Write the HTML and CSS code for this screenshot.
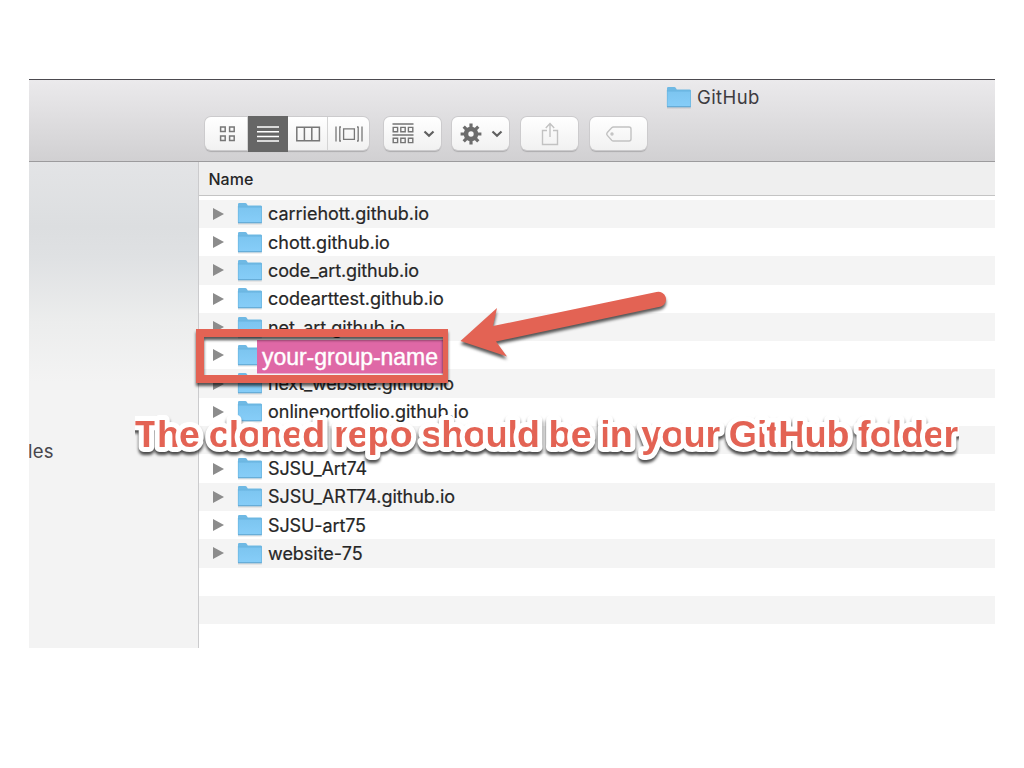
FILE: index.html
```html
<!DOCTYPE html>
<html lang="en">
<head>
<meta charset="utf-8">
<title>GitHub</title>
<link rel="stylesheet" href="styles.css">
</head>
<body>
<svg class="defs" width="0" height="0" aria-hidden="true">
  <defs>
    <linearGradient id="folderFill" x1="0" y1="0" x2="0" y2="1">
      <stop offset="0" stop-color="#7cc5f0"/><stop offset="1" stop-color="#86cdf8"/>
    </linearGradient>
    <symbol id="folder" viewBox="0 0 26 23">
      <path d="M1 20.8V2.2Q1 1 2.2 1H8.2Q9.4 1 10 2.2L10.8 3.6H23.6Q24.8 3.6 24.8 4.8V20.8Z" fill="#6fb9e4"/>
      <path d="M1 5.2H24.8V20.4H1Z" fill="url(#folderFill)"/>
      <path d="M1 5H24.8" stroke="#68b3de" stroke-width=".8"/>
      <path d="M1.300 4V20.500M24.500 4V20.500" stroke="#68b3de" stroke-width=".6"/>
      <path d="M1 20.8H24.8" stroke="#58a2cf" stroke-width="1"/>
      <path d="M1 22H24.8" stroke="#000" stroke-opacity=".12" stroke-width="1"/>
    </symbol>
  </defs>
</svg>
<main class="window">
  <header class="toolbar">
    <h1 class="title"><svg class="folder"><use href="#folder"/></svg><span>GitHub</span></h1>
    <div class="tools">
      <div class="segmented">
        <span class="seg first"><svg width="18" height="18" viewBox="0 0 18 18" fill="none" stroke="#777" stroke-width="1.5"><path d="M1.6 2h4.6v4.6H1.6zM10.6 2h4.6v4.6h-4.6zM1.6 11h4.6v4.6H1.6zM10.6 11h4.6v4.6h-4.6z"/></svg></span>
        <span class="seg active"><svg width="22" height="18" viewBox="0 0 22 18" stroke="#fff" stroke-width="1.5"><path d="M0 2h22M0 6.7h22M0 11.4h22M0 16.1h22"/></svg></span>
        <span class="seg"><svg width="26" height="18" viewBox="0 0 26 18" fill="none" stroke="#777" stroke-width="1.5"><path d="M1.8 2.2h22.6v13.6H1.8zM9.4 2v14M16.8 2v14"/></svg></span>
        <span class="seg last"><svg width="28" height="18" viewBox="0 0 28 18" fill="none" stroke="#777" stroke-width="1.3"><path d="M1 1.5v15M4.2 2H6M4.8 2v14M4.2 16H6M8.6 3.8h10.8v10.6H8.6zM22 2h1.6M23.2 2v14M22 16h1.6M27 1.5v15"/></svg></span>
      </div>
      <span class="button arrange">
        <svg width="22" height="21" viewBox="0 0 22 21" fill="none" stroke="#747474" stroke-width="1.4"><path d="M.5 1h21M.5 12h21M1.2 4.4h4.4v4.4H1.2zM8.8 4.4h4.4v4.4H8.8zM16.4 4.4h4.4v4.4h-4.4zM1.2 15.2h4.4v4.4H1.2zM8.8 15.2h4.4v4.4H8.8zM16.4 15.2h4.4v4.4h-4.4z"/></svg>
        <svg class="chevron" width="12" height="8" viewBox="0 0 12 8"><path d="M1.5 1.5L6 5.8L10.500 1.500"/></svg>
      </span>
      <span class="button action">
        <svg width="22" height="22" viewBox="-11 -11 22 22" fill="none" stroke="#6c6c6c"><circle r="5" stroke-width="4.6"/><path stroke-width="3.2" d="M0-6V-10.400M0 6V10.400M-6 0H-10.400M6 0H10.400M4.300-4.300L7.300-7.300M-4.300-4.300L-7.300-7.300M4.300 4.300L7.300 7.300M-4.300 4.300L-7.300 7.300"/></svg>
        <svg class="chevron" width="12" height="8" viewBox="0 0 12 8"><path d="M1.500 1.500L6 5.800L10.500 1.500"/></svg>
      </span>
      <span class="button"><svg width="18" height="24" viewBox="0 0 18 24" fill="none" stroke="#c2c2c2" stroke-width="1.400"><path d="M6 8.500H1.500V22.500H16.500V8.500H12M9 15V1.500M4.800 6L9 1.500L13.200 6"/></svg></span>
      <span class="button"><svg width="28" height="18" viewBox="0 0 28 18" fill="none" stroke="#c2c2c2" stroke-width="1.400"><path d="M8.500 2H24Q26 2 26 4V14Q26 16 24 16H8.500Q7.500 16 6.700 15.200L2.300 10.400Q1 9 2.300 7.600L6.700 2.800Q7.500 2 8.500 2Z"/><circle cx="7" cy="9" r="1"/></svg></span>
    </div>
  </header>
  <div class="body">
    <aside class="sidebar"><span>les</span></aside>
    <section class="files">
      <div class="column-head">Name</div>
      <ul class="list">
        <li class="row"><i class="tri"></i><svg class="folder"><use href="#folder"/></svg><span>carriehott.github.io</span></li>
        <li class="row"><i class="tri"></i><svg class="folder"><use href="#folder"/></svg><span>chott.github.io</span></li>
        <li class="row"><i class="tri"></i><svg class="folder"><use href="#folder"/></svg><span class="snug">code_art.github.io</span></li>
        <li class="row"><i class="tri"></i><svg class="folder"><use href="#folder"/></svg><span>codearttest.github.io</span></li>
        <li class="row"><i class="tri"></i><svg class="folder"><use href="#folder"/></svg><span>net_art.github.io</span></li>
        <li class="row"><i class="tri"></i><svg class="folder"><use href="#folder"/></svg></li>
        <li class="row"><i class="tri"></i><svg class="folder"><use href="#folder"/></svg><span class="tight">next_website.github.io</span></li>
        <li class="row"><i class="tri"></i><svg class="folder"><use href="#folder"/></svg><span>onlineportfolio.github.io</span></li>
        <li class="row"></li>
        <li class="row"><i class="tri"></i><svg class="folder"><use href="#folder"/></svg><span class="snug">SJSU_Art74</span></li>
        <li class="row"><i class="tri"></i><svg class="folder"><use href="#folder"/></svg><span>SJSU_ART74.github.io</span></li>
        <li class="row"><i class="tri"></i><svg class="folder"><use href="#folder"/></svg><span class="snug">SJSU-art75</span></li>
        <li class="row"><i class="tri"></i><svg class="folder"><use href="#folder"/></svg><span>website-75</span></li>
        <li class="row"></li>
        <li class="row"></li>
      </ul>
    </section>
  </div>
</main>
<svg class="annotations" width="1024" height="768" viewBox="0 0 1024 768">
  <defs>
    <clipPath id="captionArea"><rect x="135" y="405" width="824" height="70"/></clipPath>
  </defs>
  <rect x="257" y="340" width="187" height="33.500" fill="#df68a6"/>
  <text class="group-name" x="262" y="365" textLength="176">your-group-name</text>
  <g class="shadow" fill="#e36354">
    <path fill-rule="evenodd" d="M196 329H448V383H196ZM204 337V375H443V337Z"/>
  </g>
  <g class="shadow" fill="#e36354">
    <path d="M460.500 341L497 308L493 326L656.500 292A7.600 7.600 0 0 1 661 306.500L496 341.500L507 356.500Z"/>
  </g>
  <g clip-path="url(#captionArea)">
    <text class="caption" x="135" y="447" textLength="823">The cloned repo should be in your GitHub folder</text>
  </g>
</svg>
</body>
</html>
```

FILE: styles.css
```css
* { box-sizing: border-box; }
body {
  margin: 0;
  width: 1024px;
  height: 768px;
  overflow: hidden;
  background: #fff;
  font-family: Inter, "Liberation Sans", sans-serif;
  color: #262626;
}
.defs { display: block; }
.window {
  width: 966px;
  height: 569px;
  margin: 79px 0 0 29px;
  overflow: hidden;
}
.toolbar {
  height: 83px;
  border-top: 1.5px solid #4c4a4f;
  border-bottom: 1.5px solid #9c9b9d;
  background: linear-gradient(#ebeaec, #d1d0d2);
}
.title {
  display: flex;
  align-items: center;
  gap: 5px;
  height: 34px;
  margin: 0;
  padding: 0 0 0 637px;
  font-size: 18.500px;
  font-weight: 400;
  letter-spacing: .4px;
  color: #3d3b3f;
}
.folder { flex: none; width: 26px; height: 23px; }
.tools {
  display: flex;
  gap: 12px;
  padding: 3px 0 0 176px;
}
.segmented, .button {
  display: flex;
  height: 33px;
  border-radius: 6px;
  background: linear-gradient(#fff, #f1f1f1);
  box-shadow: 0 0 0 1px #cccbcd, 0 1.5px 1px #adacae;
}
.segmented { width: 164px; margin-right: 3px; }
.button { width: 57px; align-items: center; justify-content: center; }
.arrange, .action { gap: 9px; padding-left: 2px; }
.arrange { margin-right: -1px; }
.seg {
  display: flex;
  width: 40px;
  align-items: center;
  justify-content: center;
  border-right: 1px solid #d4d4d4;
}
.seg.first { width: 43px; padding-left: 3px; }
.seg.active { height: 35.500px; margin-top: -1px; background: #666; border: 0; }
.seg.last { width: 41px; border: 0; }
.chevron { fill: none; stroke: #606060; stroke-width: 2.200; }
.body { display: flex; height: 486px; }
.sidebar {
  width: 170px;
  padding-top: 278px;
  border-right: 1px solid #cbcbcd;
  background: linear-gradient(#e3e4e6 0, #dcdee0 65px, #dfe1e3 95px, #eceded 160px, #f3f3f3 220px, #f3f3f3 100%);
  font-size: 18.500px;
  letter-spacing: .3px;
  color: #47464b;
}
.sidebar span { display: block; margin-left: -1px; }
.files { flex: 1; background: #fff; }
.column-head {
  height: 34px;
  padding: 7px 0 0 9.500px;
  border-bottom: 1.500px solid #c4c4c4;
  background: #efefef;
  font-size: 16px;
  line-height: 20px;
  font-weight: 500;
}
.list { margin: 3.700px 0 0; padding: 0; list-style: none; }
.row {
  display: flex;
  align-items: center;
  height: 28.300px;
  padding-left: 14px;
  font-size: 18px;
  letter-spacing: -.02px;
  white-space: nowrap;
  -webkit-text-stroke: .2px #262626;
}
.row:nth-child(odd) { background: #f4f4f4; }
.row .folder { margin: 0 5px 0 13px; }
.snug { letter-spacing: -.11px; }
.tight { letter-spacing: -.19px; }
.tri {
  border: 6.500px solid transparent;
  border-left: 11px solid #8c8c8c;
  border-right: 0;
}
.annotations { position: absolute; left: 0; top: 0; }
.group-name {
  font: 23px "Liberation Sans", Arial, sans-serif;
  fill: #fff;
  stroke: #fff;
  stroke-width: .4px;
}
.shadow { filter: drop-shadow(0 3px 1.500px rgba(0, 0, 0, .65)); }
.caption {
  font: bold 37.500px "Liberation Sans", Arial, sans-serif;
  fill: #e36354;
  stroke: #fff;
  stroke-width: 10px;
  stroke-linejoin: round;
  paint-order: stroke;
  filter: drop-shadow(0 3px 1.500px rgba(0, 0, 0, .7));
}
```
